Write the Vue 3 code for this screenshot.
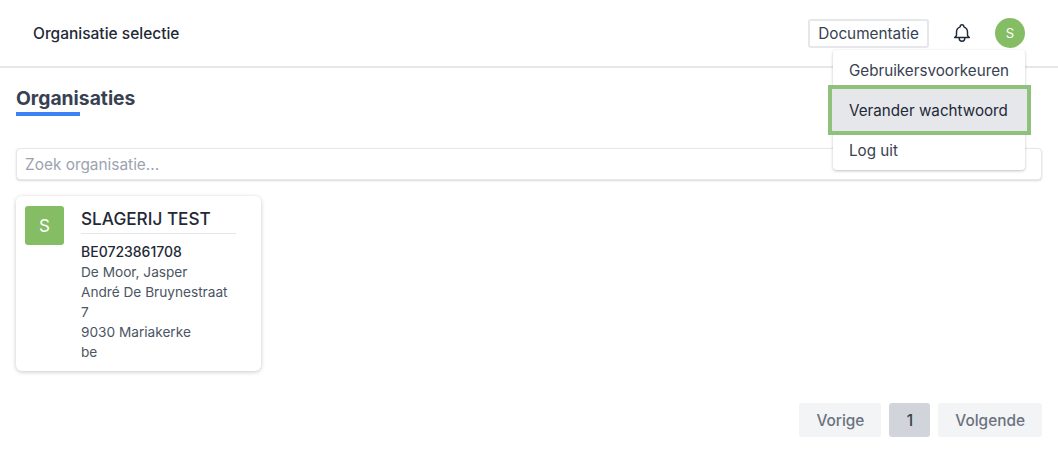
<template>
  <div class="page">
    <!-- header -->
    <header class="topbar">
      <span class="topbar-title">Organisatie selectie</span>
      <div class="topbar-actions">
        <button class="doc-btn">Documentatie</button>
        <svg class="bell" viewBox="0 0 24 24" fill="none" stroke="currentColor" stroke-linecap="round" stroke-linejoin="round">
          <path d="M15 17h5l-1.4-1.4A2 2 0 0 1 18 14.2V11a6 6 0 0 0-4-5.7V5a2 2 0 1 0-4 0v.3A6 6 0 0 0 6 11v3.2c0 .5-.2 1-.6 1.4L4 17h5m6 0v1a3 3 0 1 1-6 0v-1m6 0H9" />
        </svg>
        <div class="avatar">S</div>
      </div>
    </header>

    <!-- user menu -->
    <div class="menu">
      <div v-for="item in menuItems" :key="item" class="menu-item" :class="{ active: item === activeItem }">
        {{ item }}
      </div>
    </div>

    <main class="content">
      <h1 class="heading">Organisaties</h1>
      <input class="search" type="text" placeholder="Zoek organisatie..." />

      <div class="card">
        <div class="card-avatar">S</div>
        <div class="card-body">
          <div class="card-title">SLAGERIJ TEST</div>
          <div class="card-vat">BE0723861708</div>
          <div v-for="line in addressLines" :key="line" class="card-line">{{ line }}</div>
        </div>
      </div>

      <nav class="pagination">
        <button class="page-btn">Vorige</button>
        <button class="page-btn current">1</button>
        <button class="page-btn">Volgende</button>
      </nav>
    </main>
  </div>
</template>

<script setup>
const menuItems = ["Gebruikersvoorkeuren", "Verander wachtwoord", "Log uit"];
const activeItem = "Verander wachtwoord";
const addressLines = ["De Moor, Jasper", "André De Bruynestraat", "7", "9030 Mariakerke", "be"];
</script>

<style>
html,
body {
  margin: 0;
  background: #ffffff;
}
</style>

<style scoped>
.page {
  position: relative;
  height: 449px;
  overflow: hidden;
  font-family: Inter, "Liberation Sans", sans-serif;
  color: #111827;
  background: #ffffff;
}

.topbar {
  height: 66px;
  box-sizing: content-box;
  border-bottom: 2px solid #e5e7eb;
  display: flex;
  align-items: center;
  justify-content: space-between;
  padding: 0 33px;
}

.topbar-title {
  font-size: 15.5px;
  font-weight: 500;
  color: #1f2937;
}

.topbar-actions {
  display: flex;
  align-items: center;
}

.doc-btn {
  width: 121px;
  height: 29px;
  padding: 0;
  border: 2px solid #e5e7eb;
  border-radius: 3px;
  background: #ffffff;
  font-family: inherit;
  font-size: 15.3px;
  color: #374151;
}

.bell {
  width: 22px;
  height: 22px;
  margin-left: 22px;
  color: #1f2937;
  stroke-width: 1.6;
}

.avatar {
  width: 30px;
  height: 30px;
  margin-left: 22px;
  border-radius: 50%;
  background: #84bd64;
  color: #ffffff;
  font-size: 13px;
  display: flex;
  align-items: center;
  justify-content: center;
}

/* dropdown */
.menu {
  position: absolute;
  top: 50px;
  left: 833px;
  width: 192px;
  background: #ffffff;
  border-radius: 4px;
  box-shadow: 0 1px 3px rgba(0, 0, 0, 0.25);
}

.menu-item {
  height: 40px;
  line-height: 42px;
  padding-left: 16px;
  font-size: 15.2px;
  color: #374151;
}

.menu-item.active {
  background: #e5e7eb;
  color: #1f2937;
  outline: 4px solid #8fc07c;
  margin: -1px -1.5px;
  padding-left: 17.5px;
  height: 42px;
  line-height: 44px;
}

.content {
  padding: 0 16px;
}

.heading {
  width: fit-content;
  margin: 17px 0 0;
  font-size: 19.3px;
  line-height: 26px;
  font-weight: 700;
  color: #374151;
  position: relative;
  padding-bottom: 5px;
}

.heading::after {
  content: "";
  position: absolute;
  left: 0;
  bottom: 0.5px;
  width: 64px;
  height: 4px;
  background: #3b82f6;
}

.search {
  display: block;
  box-sizing: border-box;
  width: 1026px;
  height: 32px;
  margin-top: 32px;
  padding: 0 8px;
  border: 1px solid #e5e7eb;
  border-radius: 4px;
  box-shadow: 0 1px 2px rgba(0, 0, 0, 0.15);
  font-family: inherit;
  font-size: 15.4px;
  color: #374151;
  outline: none;
}

.search::placeholder {
  color: #9ca3af;
  opacity: 1;
}

.card {
  box-sizing: border-box;
  width: 245px;
  height: 175px;
  margin-top: 16px;
  padding: 10px 9px;
  display: flex;
  gap: 17px;
  border-radius: 6px;
  background: #ffffff;
  box-shadow: 0 1px 4px rgba(0, 0, 0, 0.22);
}

.card-avatar {
  width: 39px;
  height: 39px;
  flex-shrink: 0;
  border-radius: 3px;
  background: #84bd64;
  color: #ffffff;
  font-size: 17px;
  display: flex;
  align-items: center;
  justify-content: center;
}

.card-body {
  width: 155px;
  padding-top: 1px;
  font-size: 13.65px;
  line-height: 20px;
  color: #4b5563;
}

.card-title {
  font-size: 17.2px;
  font-weight: 500;
  line-height: 24px;
  height: 26px;
  color: #1f2937;
  border-bottom: 1px solid #e5e7eb;
  margin-bottom: 8px;
}

.card-vat {
  font-size: 14px;
  font-weight: 500;
  color: #1f2937;
}

.pagination {
  display: flex;
  justify-content: flex-end;
  gap: 8px;
  margin-top: 32px;
}

.page-btn {
  height: 34px;
  padding: 0 17px;
  border: none;
  border-radius: 3px;
  background: #f3f4f6;
  font-family: inherit;
  font-size: 15.4px;
  font-weight: 500;
  color: #6b7280;
}

.page-btn.current {
  width: 41px;
  padding: 0;
  background: #d1d5db;
  color: #374151;
}
</style>
